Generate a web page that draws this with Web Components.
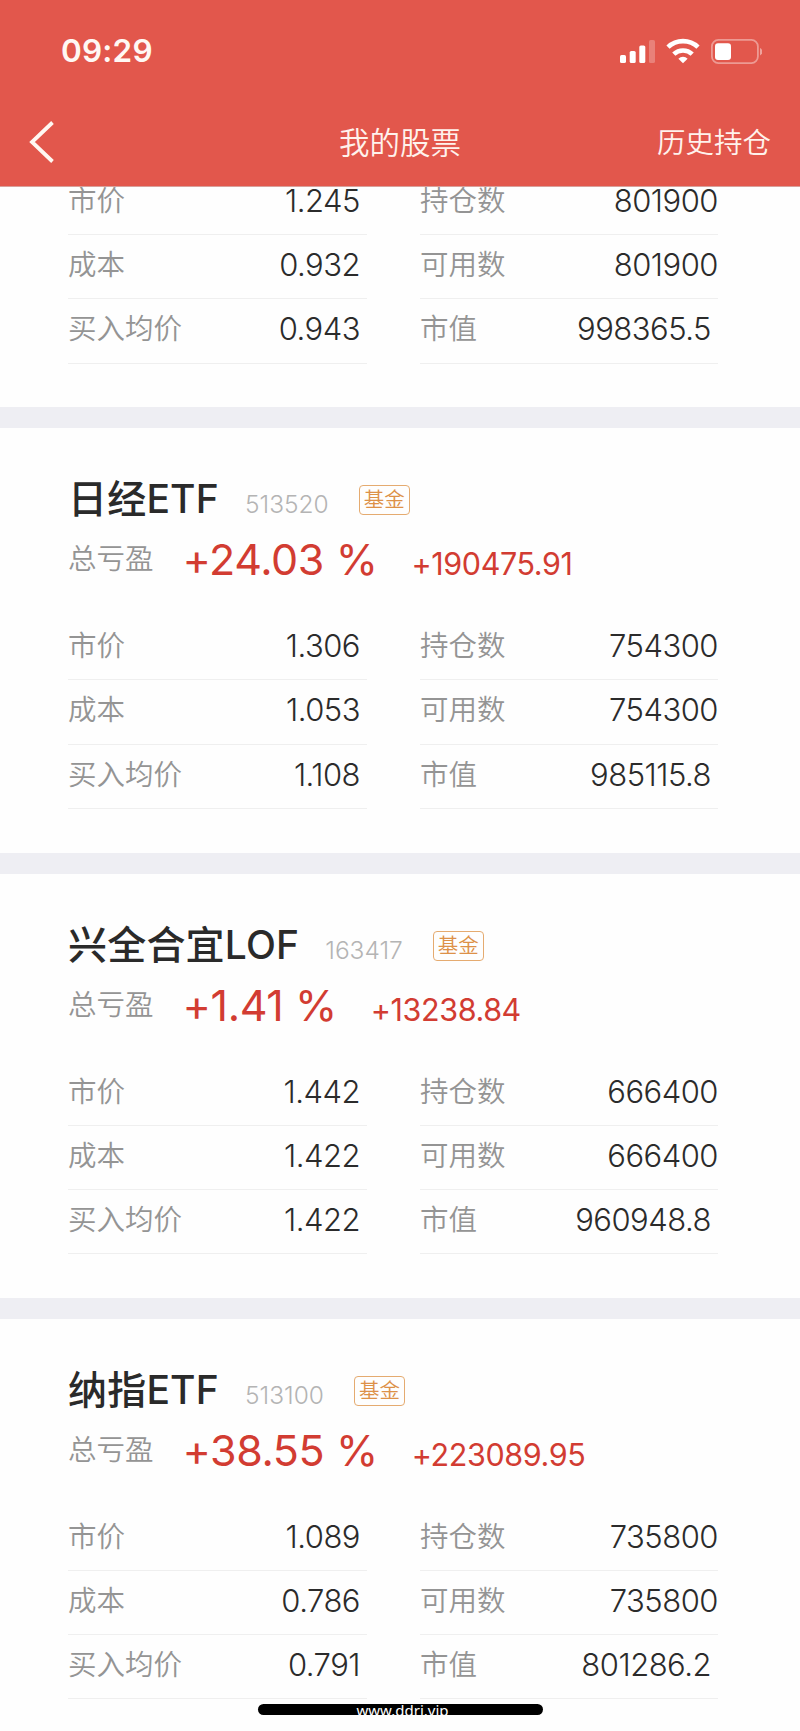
<!DOCTYPE html>
<html lang="zh-CN">
<head>
<meta charset="UTF-8">
<title>我的股票</title>
<style>
  body {
    margin: 0;
    background: #fefefe;
    font-family: Inter, 'Noto Sans CJK SC', sans-serif;
  }
</style>
</head>
<body>
<stock-app></stock-app>

<script>
const holdings = [
  {
    rows: [
      ['市价', '1.245', '持仓数', '801900'],
      ['成本', '0.932', '可用数', '801900'],
      ['买入均价', '0.943', '市值', '998365.5'],
    ],
  },
  {
    name: '日经ETF', code: '513520', percent: '+24.03 %', amount: '+190475.91',
    rows: [
      ['市价', '1.306', '持仓数', '754300'],
      ['成本', '1.053', '可用数', '754300'],
      ['买入均价', '1.108', '市值', '985115.8'],
    ],
  },
  {
    name: '兴全合宜LOF', code: '163417', percent: '+1.41 %', amount: '+13238.84',
    rows: [
      ['市价', '1.442', '持仓数', '666400'],
      ['成本', '1.422', '可用数', '666400'],
      ['买入均价', '1.422', '市值', '960948.8'],
    ],
  },
  {
    name: '纳指ETF', code: '513100', percent: '+38.55 %', amount: '+223089.95',
    rows: [
      ['市价', '1.089', '持仓数', '735800'],
      ['成本', '0.786', '可用数', '735800'],
      ['买入均价', '0.791', '市值', '801286.2'],
    ],
  },
];

class StatusBar extends HTMLElement {
  constructor() {
    super();
    this.attachShadow({ mode: 'open' });
  }

  connectedCallback() {
    this.shadowRoot.innerHTML = `
      <style>
        :host {
          display: flex;
          justify-content: space-between;
          align-items: center;
          height: 102px;
          padding: 0 38px 0 61px;
          box-sizing: border-box;
          color: #fff8f4;
        }
        .time {
          font-size: 31.5px;
          font-weight: 560;
          line-height: 40px;
          letter-spacing: 0.2px;
        }
        svg {
          display: block;
        }
      </style>
      <span class="time"><slot></slot></span>
      <svg width="144" height="30" viewBox="618 35 144 30">
        <g fill="#fff">
          <rect x="620" y="54" width="6" height="8" rx="1.6"/>
          <rect x="629.7" y="50" width="6" height="12" rx="1.6"/>
          <rect x="639.3" y="44.5" width="6" height="17.5" rx="1.6"/>
          <rect x="649" y="39" width="6" height="23" rx="1.6" opacity="0.25"/>
          <path d="M683 62.3l-4.6-4.6a6.6 6.6 0 0 1 9.2 0z"/>
          <rect x="715" y="42.2" width="16" height="16.8" rx="3"/>
        </g>
        <g fill="none" stroke="#fff" stroke-width="4.6">
          <path d="M668 46.2a21.6 21.6 0 0 1 30 0"/>
          <path d="M673.8 53.2a13.3 13.3 0 0 1 18.4 0"/>
        </g>
        <rect x="711.9" y="38.9" width="46" height="23.2" rx="6.5" fill="none" stroke="#fff" stroke-width="1.8" opacity="0.4"/>
        <path d="M760 47v7.4c1.5-.6 2.4-2 2.4-3.7s-.9-3.1-2.4-3.7z" fill="#fff" opacity="0.45"/>
      </svg>
    `;
  }
}

class NavBar extends HTMLElement {
  constructor() {
    super();
    this.attachShadow({ mode: 'open' });
  }

  connectedCallback() {
    this.shadowRoot.innerHTML = `
      <style>
        :host {
          display: grid;
          grid-template-columns: 1fr auto 1fr;
          align-items: center;
          height: 80px;
          padding: 0 29px;
          color: #fff2ec;
          font-weight: 350;
        }
        .title {
          padding-bottom: 3px;
          font-size: 30.5px;
        }
        .action {
          justify-self: end;
          padding-bottom: 3px;
          font-size: 28.5px;
        }
        svg {
          display: block;
        }
      </style>
      <svg width="26" height="44" viewBox="0 0 26 44">
        <path d="M23.5 2.5L3 22l20.5 19.5" fill="none" stroke="#fff8f2" stroke-width="3.8"/>
      </svg>
      <span class="title"><slot></slot></span>
      <span class="action"><slot name="action"></slot></span>
    `;
  }
}

class FieldRow extends HTMLElement {
  constructor() {
    super();
    this.attachShadow({ mode: 'open' });
  }

  connectedCallback() {
    this.shadowRoot.innerHTML = `
      <style>
        :host {
          display: flex;
          justify-content: space-between;
          height: 64.2px;
          box-sizing: border-box;
          border-bottom: 1px solid #efefef;
          line-height: 60px;
        }
        .label {
          color: #949494;
          font-size: 28.5px;
          font-weight: 350;
        }
        .value {
          padding-right: 7px;
          color: #2b2b2b;
          font-size: 31px;
          font-weight: 350;
          letter-spacing: -0.5px;
        }
        :host([flush]) .value {
          padding-right: 0;
        }
      </style>
      <span class="label"><slot name="label"></slot></span>
      <span class="value"><slot></slot></span>
    `;
  }
}

class FundTag extends HTMLElement {
  constructor() {
    super();
    this.attachShadow({ mode: 'open' });
  }

  connectedCallback() {
    this.shadowRoot.innerHTML = `
      <style>
        :host {
          display: block;
          width: 51px;
          height: 30px;
          box-sizing: border-box;
          border: 1.5px solid #e5ab70;
          border-radius: 4px;
          color: #dd9148;
          font-size: 20.5px;
          font-weight: 350;
          line-height: 27px;
          text-align: center;
        }
      </style>
      <slot></slot>
    `;
  }
}

class HoldingCard extends HTMLElement {
  constructor() {
    super();
    this.attachShadow({ mode: 'open' });
  }

  set data(holding) {
    const head = holding.name ? `
      <div class="head">
        <span class="name">${holding.name}</span>
        <span class="code">${holding.code}</span>
        <fund-tag>基金</fund-tag>
      </div>
      <div class="profit">
        <span class="label">总亏盈</span>
        <span class="percent">${holding.percent}</span>
        <span class="amount">${holding.amount}</span>
      </div>
    ` : '';
    const fields = holding.rows.map(([l1, v1, l2, v2]) => `
      <field-row><span slot="label">${l1}</span>${v1}</field-row>
      <field-row ${l2 === '市值' ? '' : 'flush'}><span slot="label">${l2}</span>${v2}</field-row>
    `).join('');

    this.shadowRoot.innerHTML = `
      <style>
        :host {
          display: block;
          padding: 0 82px 43.7px 68px;
          border-bottom: 21px solid #eeeef3;
        }
        .head {
          display: flex;
          align-items: baseline;
          height: 60px;
          padding-top: 41px;
          line-height: 60px;
        }
        .name {
          margin-right: 26px;
          color: #2a2a2a;
          font-size: 39px;
          font-weight: 500;
          letter-spacing: 0.2px;
        }
        .code {
          margin-right: 30px;
          color: #b4b4b4;
          font-size: 24.5px;
          font-weight: 300;
          letter-spacing: 0;
        }
        fund-tag {
          align-self: flex-start;
          margin-top: 16px;
        }
        .profit {
          display: flex;
          align-items: baseline;
          height: 87px;
          line-height: 60px;
        }
        .label {
          align-self: flex-start;
          margin-right: 29px;
          color: #949494;
          font-size: 28.5px;
          font-weight: 350;
        }
        .percent {
          margin-right: 34px;
          color: #d23c32;
          font-size: 43px;
          font-weight: 380;
          letter-spacing: -0.4px;
        }
        .amount {
          color: #d23c32;
          font-size: 30.5px;
          font-weight: 380;
          letter-spacing: -0.4px;
        }
        .fields {
          display: grid;
          grid-template-columns: 299px 298px;
          column-gap: 53px;
        }
      </style>
      ${head}
      <div class="fields">${fields}</div>
    `;
  }
}

class HomeBar extends HTMLElement {
  constructor() {
    super();
    this.attachShadow({ mode: 'open' });
  }

  connectedCallback() {
    this.shadowRoot.innerHTML = `
      <style>
        /* lies over the scrolled list */
        :host {
          position: absolute;
          left: 258px;
          bottom: 16px;
          width: 285px;
          height: 11px;
          box-sizing: border-box;
          padding-left: 4px;
          border-radius: 6px;
          background: #000;
          color: #fff;
          font-family: 'Noto Sans', sans-serif;
          font-size: 15px;
          line-height: 13px;
          text-align: center;
        }
      </style>
      <slot></slot>
    `;
  }
}

class StockApp extends HTMLElement {
  constructor() {
    super();
    this.attachShadow({ mode: 'open' });
  }

  connectedCallback() {
    this.shadowRoot.innerHTML = `
      <style>
        :host {
          display: flex;
          flex-direction: column;
          position: relative;
          width: 800px;
          height: 1731px;
          overflow: hidden;
        }
        header {
          flex: none;
          position: relative;
          z-index: 1;
          height: 186px;
          background: #e2574c;
          border-bottom: 1px solid #d8a09b;
        }
        main {
          flex: 1;
          min-height: 0;
          margin-top: -16px;
        }
      </style>
      <header>
        <status-bar>09:29</status-bar>
        <nav-bar>我的股票<span slot="action">历史持仓</span></nav-bar>
      </header>
      <main></main>
      <home-bar>www.ddrj.vip</home-bar>
    `;
    const main = this.shadowRoot.querySelector('main');
    holdings.forEach((holding) => {
      const card = document.createElement('holding-card');
      card.data = holding;
      main.appendChild(card);
    });
  }
}

customElements.define('status-bar', StatusBar);
customElements.define('nav-bar', NavBar);
customElements.define('field-row', FieldRow);
customElements.define('fund-tag', FundTag);
customElements.define('holding-card', HoldingCard);
customElements.define('home-bar', HomeBar);
customElements.define('stock-app', StockApp);
</script>
</body>
</html>
